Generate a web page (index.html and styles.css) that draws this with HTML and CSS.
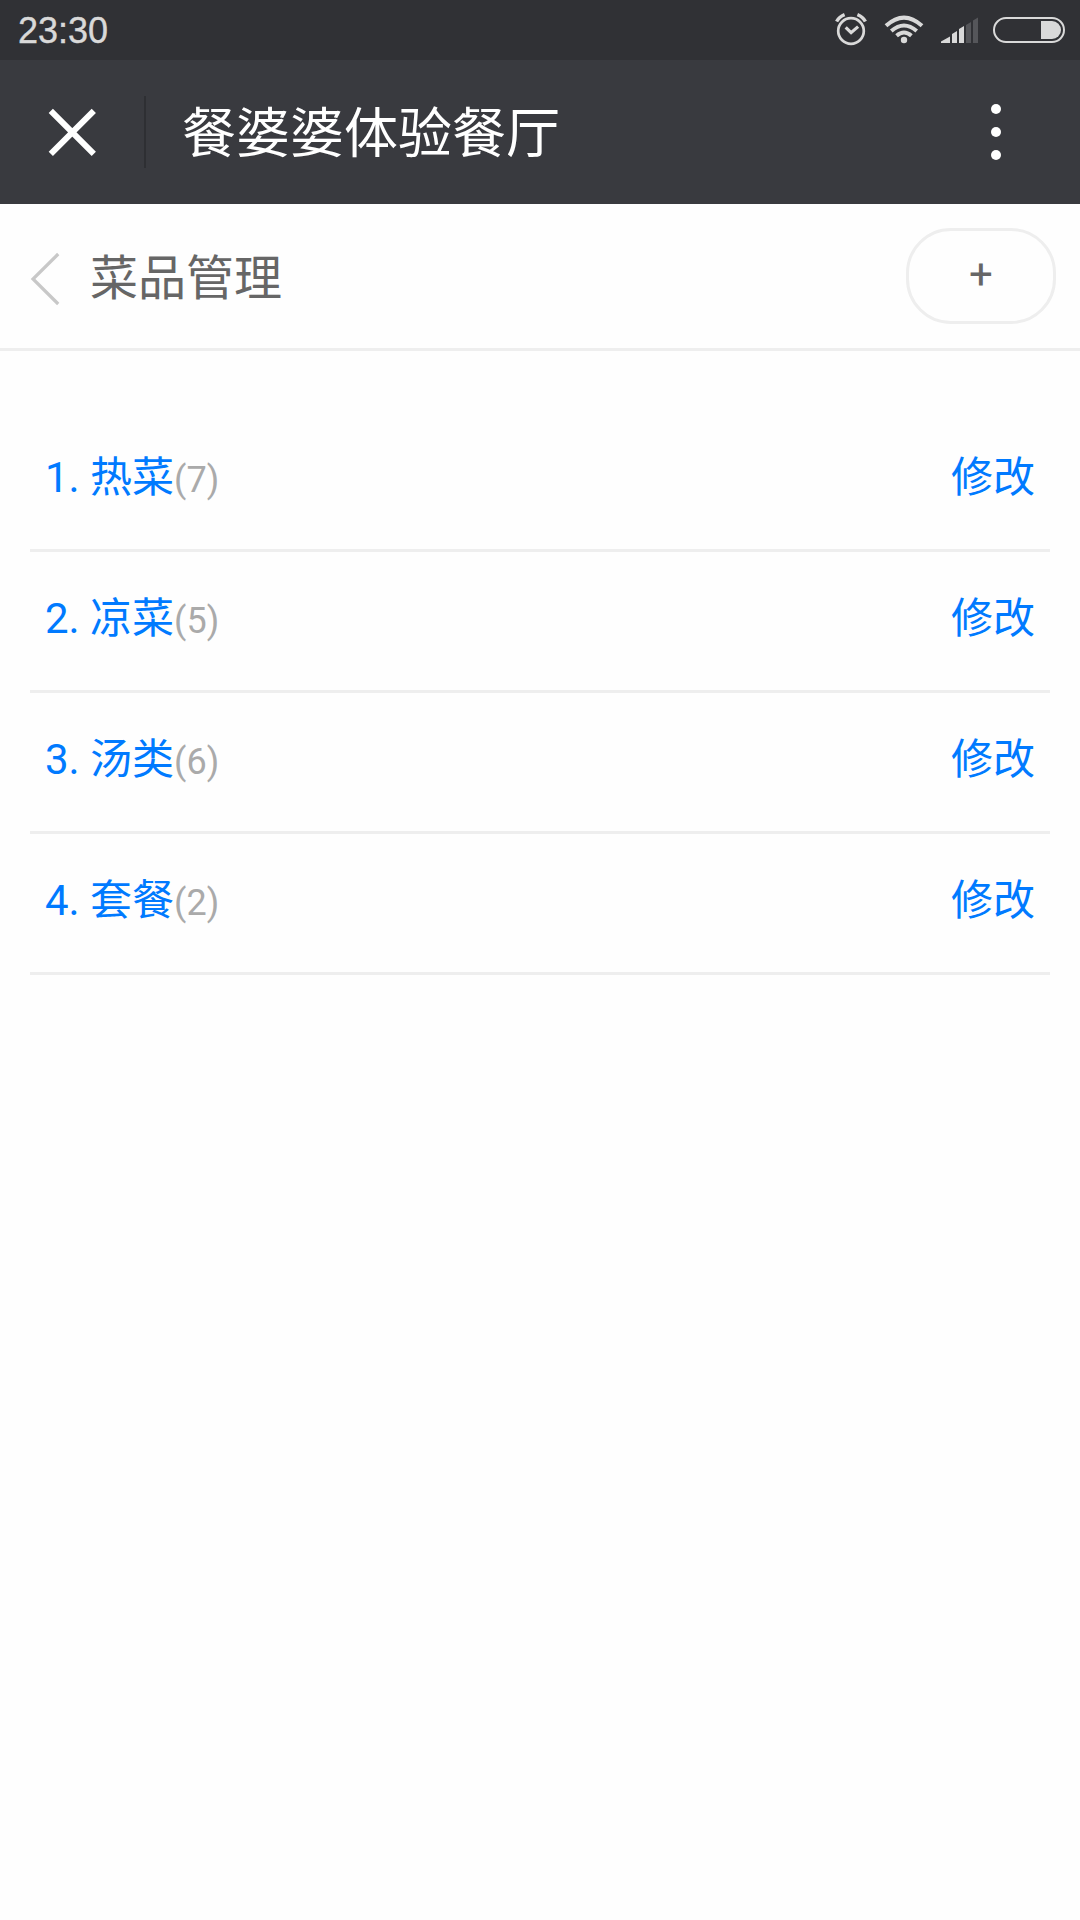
FILE: index.html
```html
<!DOCTYPE html>
<html lang="zh-CN">
<head>
<meta charset="utf-8">
<title>餐婆婆体验餐厅</title>
<link rel="stylesheet" href="styles.css">
</head>
<body>
<div class="status-bar">
  <span class="clock">23:30</span>
  <svg class="status-icons" width="240" height="60" viewBox="830 0 240 60" fill="none" stroke="#d9d9d9">
    <circle cx="851" cy="31" r="12.8" stroke-width="2.7"/>
    <path d="M845.7 27.3l5.4 5.3 7-6" stroke-width="3.2"/>
    <path d="M836.6 21.5Q839 16.8 844.6 14.6M865.4 21.5Q863 16.8 857.4 14.6" stroke-width="3.4"/>
    <path d="M886 25.8Q904 9.4 922 25.8M891.3 31.1Q904 19.9 916.7 31.1M896.6 35.7Q904 29.3 911.4 35.7" stroke-width="4"/>
    <circle cx="904" cy="40" r="3.2" fill="#d9d9d9" stroke="none"/>
    <path d="M941 43v-1.5l9-5V43zM952 43v-9l5-3V43zM959 43V29l5-3V43z" fill="#d9d9d9" stroke="none"/>
    <path d="M966 43V25l5-3V43zM973 43V20.500l5-3V43z" fill="#55565a" stroke="none"/>
    <rect x="994" y="18" width="70" height="24" rx="12" stroke-width="2"/>
    <path d="M1041 21h11a9 9 0 0 1 0 18h-11z" fill="#d9d9d9" stroke="none"/>
  </svg>
</div>
<div class="app-bar">
  <svg class="close" width="48" height="48" viewBox="0 0 48 48" stroke="#fff" stroke-width="6"><path d="M2.800 2.800l43 43M45.800 2.800l-43 43"/></svg>
  <span class="divider"></span>
  <h1 class="app-title">餐婆婆体验餐厅</h1>
  <div class="more"><i class="dot"></i><i class="dot"></i><i class="dot"></i></div>
</div>
<header class="page-header">
  <svg class="back" width="30" height="56" viewBox="0 0 30 56" fill="none" stroke="#c8c8c8" stroke-width="3.200"><path d="M28.200 3L3 28l25.200 25"/></svg>
  <h2 class="page-title">菜品管理</h2>
  <button class="add">+</button>
</header>
<ul class="categories">
  <li class="category"><a class="name">1. 热菜<span class="count">(7)</span></a><a class="edit">修改</a></li>
  <li class="category"><a class="name">2. 凉菜<span class="count">(5)</span></a><a class="edit">修改</a></li>
  <li class="category"><a class="name">3. 汤类<span class="count">(6)</span></a><a class="edit">修改</a></li>
  <li class="category"><a class="name">4. 套餐<span class="count">(2)</span></a><a class="edit">修改</a></li>
</ul>
</body>
</html>
```
FILE: styles.css
```css
* { box-sizing: border-box; }
body {
  margin: 0;
  min-height: 1920px;
  background: #fefefe;
  font-family: Roboto, "Noto Sans CJK SC", sans-serif;
}
.status-bar {
  display: flex;
  justify-content: space-between;
  height: 60px;
  padding: 0 10px 0 18px;
  background: #303135;
}
.clock {
  font: 36px/61px "Liberation Sans", sans-serif;
  color: #d9d9d9;
  -webkit-text-stroke: 0.4px #d9d9d9;
}
.app-bar {
  display: flex;
  align-items: center;
  height: 144px;
  padding: 0 79px 0 48px;
  background: #393a3f;
}
.divider {
  width: 2px;
  height: 72px;
  margin: 0 36px 0 48px;
  background: #2e2f33;
}
.app-title {
  flex: 1;
  margin: 0;
  padding-top: 5px;
  font-size: 54px;
  font-weight: 400;
  line-height: 80px;
  color: #fff;
}
.more {
  display: flex;
  flex-direction: column;
  gap: 13px;
}
.dot {
  width: 10px;
  height: 10px;
  border-radius: 50%;
  background: #fff;
}
.page-header {
  display: flex;
  align-items: center;
  height: 147px;
  padding: 0 24px 0 30px;
  border-bottom: 3px solid #eee;
}
.back { margin-top: 6px; }
.page-title {
  flex: 1;
  margin: 0 0 0 30px;
  padding-top: 5px;
  font-size: 48px;
  font-weight: 400;
  line-height: 72px;
  color: #666;
}
.add {
  width: 150px;
  height: 96px;
  padding: 0 0 3px;
  border: 3px solid #eee;
  border-radius: 45px;
  background: none;
  font: 42px/1 Roboto, sans-serif;
  color: #666;
}
.categories {
  margin: 0;
  padding: 60px 30px 0;
  list-style: none;
}
.category {
  display: flex;
  justify-content: space-between;
  height: 141px;
  padding: 0 15px;
  border-bottom: 3px solid #eee;
  font-size: 42px;
  line-height: 134px;
  color: #007aff;
}
.count {
  font-size: 36px;
  color: #aaa;
}
```
